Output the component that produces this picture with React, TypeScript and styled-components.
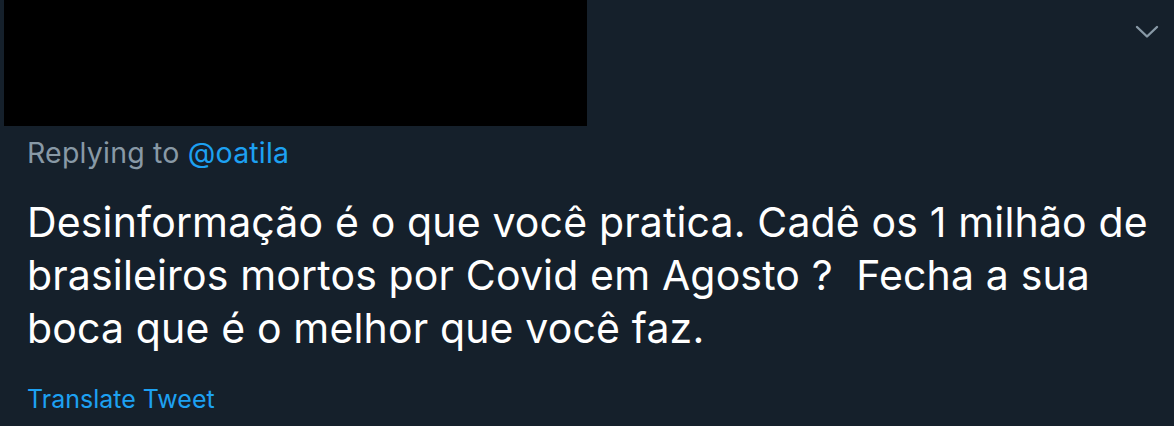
import React from "react";
import styled, { createGlobalStyle } from "styled-components";

const GlobalStyle = createGlobalStyle`
  html, body {
    margin: 0;
    padding: 0;
    background: #15202b;
  }
  body {
    font-family: Inter, Roboto, "Noto Sans", "Liberation Sans", sans-serif;
    -webkit-font-smoothing: antialiased;
  }
`;

const Tweet = styled.article`
  width: 1174px;
  height: 426px;
  background: #15202b;
  display: flex;
  flex-direction: column;
  overflow: hidden;
`;

const TopRow = styled.div`
  display: flex;
  align-items: flex-start;
  justify-content: space-between;
  padding-left: 4px;
`;

const Redacted = styled.div`
  width: 583px;
  height: 126px;
  background: #000;
`;

const MoreButton = styled.button`
  border: 0;
  background: transparent;
  padding: 0;
  margin: 24px 15px 0 0;
  width: 24px;
  height: 16px;
  display: flex;
  align-items: center;
  justify-content: center;
  color: #8899a6;
  cursor: pointer;
`;

const Body = styled.div`
  padding: 11px 10px 0 27px;
  display: flex;
  flex-direction: column;
`;

const ReplyLine = styled.div`
  font-size: 28.5px;
  line-height: 32px;
  letter-spacing: 0.2px;
  color: #8899a6;
`;

const Mention = styled.a`
  color: #1da1f2;
  text-decoration: none;
`;

const Text = styled.p`
  margin: 27px 0 0;
  font-size: 41px;
  line-height: 53px;
  letter-spacing: 0.15px;
  color: #ffffff;
  white-space: pre;
`;

const Translate = styled.a`
  margin-top: 29px;
  font-size: 25px;
  line-height: 30px;
  color: #1da1f2;
  text-decoration: none;
  align-self: flex-start;
`;

export default function App() {
  return (
    <>
      <GlobalStyle />
      <Tweet>
        <TopRow>
          <Redacted />
          <MoreButton aria-label="More">
            <svg width="24" height="14" viewBox="0 0 24 14" fill="none">
              <path
                d="M2 2 L12 11.5 L22 2"
                stroke="currentColor"
                strokeWidth="2.4"
                strokeLinecap="round"
                strokeLinejoin="round"
              />
            </svg>
          </MoreButton>
        </TopRow>
        <Body>
          <ReplyLine>
            Replying to <Mention href="#">@oatila</Mention>
          </ReplyLine>
          <Text>
            {"Desinformação é o que você pratica. Cadê os 1 milhão de\nbrasileiros mortos por Covid em Agosto ?  Fecha a sua\nboca que é o melhor que você faz."}
          </Text>
          <Translate href="#">Translate Tweet</Translate>
        </Body>
      </Tweet>
    </>
  );
}
